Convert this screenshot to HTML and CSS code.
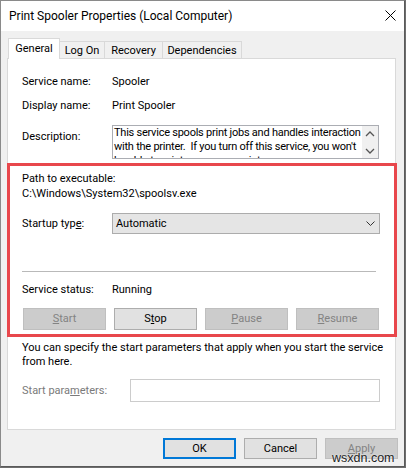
FILE: index.html
```html
<!DOCTYPE html>
<html>
<head>
<meta charset="utf-8">
<link rel="stylesheet" href="styles.css">
</head>
<body>
<div class="window">
  <div class="titlebar">
    <span class="title">Print Spooler Properties (Local Computer)</span>
    <svg class="close" width="11" height="11" viewBox="0 0 11 11"><path d="M0.5 0.5 L10.5 10.5 M10.5 0.5 L0.5 10.5" stroke="#000" stroke-width="1" fill="none"/></svg>
  </div>
  <div class="tabs">
    <div class="tab selected t-general">General</div>
    <div class="tab t-logon">Log On</div>
    <div class="tab t-recovery">Recovery</div>
    <div class="tab t-deps">Dependencies</div>
  </div>
  <div class="panel">
    <div class="row r-name"><span class="label">Service name:</span><span>Spooler</span></div>
    <div class="row r-display"><span class="label">Display name:</span><span>Print Spooler</span></div>
    <div class="row r-desc">
      <span class="label desc-label">Description:</span>
      <div class="descbox">
        <div class="desctext">This service spools print jobs and handles interaction<br>with the printer.&nbsp; If you turn off this service, you won't<br>be able to print or see your printers.</div>
        <div class="scroll">
          <svg width="10" height="6" viewBox="0 0 10 6"><path d="M1 5 L5 1 L9 5" stroke="#555" stroke-width="1.3" fill="none"/></svg>
          <svg width="10" height="6" viewBox="0 0 10 6"><path d="M1 1 L5 5 L9 1" stroke="#555" stroke-width="1.3" fill="none"/></svg>
        </div>
      </div>
    </div>
    <div class="line r-path">Path to executable:</div>
    <div class="line r-pathval">C:\Windows\System32\spoolsv.exe</div>
    <div class="row r-startup">
      <span class="label">Startup typ<u>e</u>:</span>
      <div class="select"><span>Automatic</span><svg width="9" height="5" viewBox="0 0 9 5"><path d="M0.5 0.5 L4.5 4.5 L8.5 0.5" stroke="#333" stroke-width="1" fill="none"/></svg></div>
    </div>
    <div class="sep"></div>
    <div class="row r-status"><span class="label">Service status:</span><span>Running</span></div>
    <div class="btnrow">
      <div class="btn disabled"><u>S</u>tart</div>
      <div class="btn">S<u>t</u>op</div>
      <div class="btn disabled"><u>P</u>ause</div>
      <div class="btn disabled"><u>R</u>esume</div>
    </div>
    <p class="para">You can specify the start parameters that apply when you start the service<br>from here.</p>
    <div class="row r-params">
      <span class="label wide dim">Start para<u>m</u>eters:</span>
      <div class="input"></div>
    </div>
  </div>
  <div class="footer">
    <div class="btn fbtn default">OK</div>
    <div class="btn fbtn">Cancel</div>
    <div class="btn fbtn disabled"><u>A</u>pply</div>
  </div>
  <div class="highlight"></div>
  <div class="watermark">wsxdn.com</div>
</div>
</body>
</html>
```

FILE: styles.css
```css
* { box-sizing: border-box; }
html, body { margin: 0; padding: 0; }
body {
  width: 406px;
  height: 468px;
  background: #6e6e6e;
  font-family: Roboto, "Liberation Sans", sans-serif;
  font-size: 11px;
  color: #000;
  overflow: hidden;
}
.window {
  position: relative;
  width: 405px;
  height: 467px;
  background: #f0f0f0;
  border: 1px solid #8a8a8a;
  border-right-color: #5a5a5a;
  border-bottom-color: #5a5a5a;
}
.titlebar {
  height: 30px;
  background: #fff;
  display: flex;
  align-items: center;
  justify-content: space-between;
  padding-left: 8px;
  padding-right: 8px;
}
.title { font-size: 12px; line-height: 14px; }
.close { display: block; margin-top: -1px; }

.tabs {
  display: flex;
  align-items: flex-end;
  height: 20px;
  margin-top: 7px;
  margin-left: 7px;
}
.tab {
  height: 17px;
  line-height: 15px;
  padding-top: 1px;
  text-align: center;
  border: 1px solid #d9d9d9;
  border-bottom: none;
  background: #f0f0f0;
  margin-left: -1px;
  white-space: nowrap;
}
.tab.selected {
  height: 21px;
  line-height: 19px;
  padding-top: 0;
  margin-bottom: -1px;
  margin-left: 0;
  background: #fff;
  position: relative;
  z-index: 1;
}
.t-general { width: 52px; }
.t-logon { width: 46px; }
.t-recovery { width: 59px; }
.t-deps { width: 80px; }

.panel {
  margin-left: 6px;
  width: 389px;
  height: 372px;
  background: #fff;
  border: 1px solid #d9d9d9;
  padding-left: 14px;
  display: flex;
  flex-direction: column;
  align-items: flex-start;
}
.row { display: flex; align-items: flex-start; line-height: 14px; }
.label { width: 90px; flex: none; white-space: nowrap; }
.label.wide { width: 108px; }
.dim { color: #7a7a7a; }
.r-name { margin-top: 16px; }
.r-display { margin-top: 10px; }
.r-desc { margin-top: 12px; }
.desc-label { margin-top: 5px; }
.descbox {
  width: 267px;
  height: 34px;
  border: 1px solid #abadb3;
  display: flex;
  overflow: hidden;
}
.desctext {
  flex: 1;
  padding-left: 1px;
  line-height: 14px;
  letter-spacing: -0.24px;
  white-space: nowrap;
  overflow: hidden;
}
.scroll {
  width: 16px;
  flex: none;
  background: #f0f0f0;
  display: flex;
  flex-direction: column;
  align-items: center;
  justify-content: space-between;
  padding: 5px 0 4px;
}
.scroll svg { display: block; }
.line { line-height: 14px; white-space: nowrap; }
.r-path { margin-top: 13px; }
.r-pathval { margin-top: 1px; }
.r-startup { margin-top: 12px; line-height: 21px; }
.select {
  width: 268px;
  height: 21px;
  background: #e5e5e5;
  border: 1px solid #acacac;
  display: flex;
  align-items: center;
  justify-content: space-between;
  padding-left: 3px;
  padding-right: 4px;
  line-height: 19px;
}
.select svg { display: block; }
.sep {
  margin-top: 37px;
  width: 354px;
  height: 1px;
  background: #b9b9b9;
}
.r-status { margin-top: 11px; }
.btnrow {
  margin-top: 11px;
  margin-left: 1px;
  width: 356px;
  display: grid;
  grid-template-columns: repeat(4, 1fr);
  column-gap: 8px;
}
.btn {
  height: 22px;
  line-height: 20px;
  text-align: center;
  background: #e1e1e1;
  border: 1px solid #adadad;
}
.btn.disabled {
  background: #cccccc;
  border-color: #bfbfbf;
  color: #838383;
}
.para {
  margin: 11px 0 0;
  line-height: 14px;
  white-space: nowrap;
}
.r-params { margin-top: 10px; line-height: 23px; }
.input {
  width: 250px;
  height: 23px;
  background: #fff;
  border: 1px solid #cccccc;
}
.footer {
  margin-top: 8px;
  padding-right: 6px;
  display: flex;
  justify-content: flex-end;
  gap: 8px;
}
.fbtn { width: 73px; height: 21px; line-height: 19px; font-size: 11px; }
.fbtn.default { border: 2px solid #0078d7; line-height: 17px; }
.highlight {
  position: absolute;
  left: 6px;
  top: 162px;
  width: 390px;
  height: 174px;
  border: 3px solid #e8474c;
  pointer-events: none;
}
.watermark {
  position: absolute;
  left: 331px;
  top: 450px;
  font-family: "Liberation Sans", sans-serif;
  font-size: 12.5px;
  line-height: 15px;
  color: #1e1e1e;
  text-shadow: 0 0 2px #fff;
}
```
